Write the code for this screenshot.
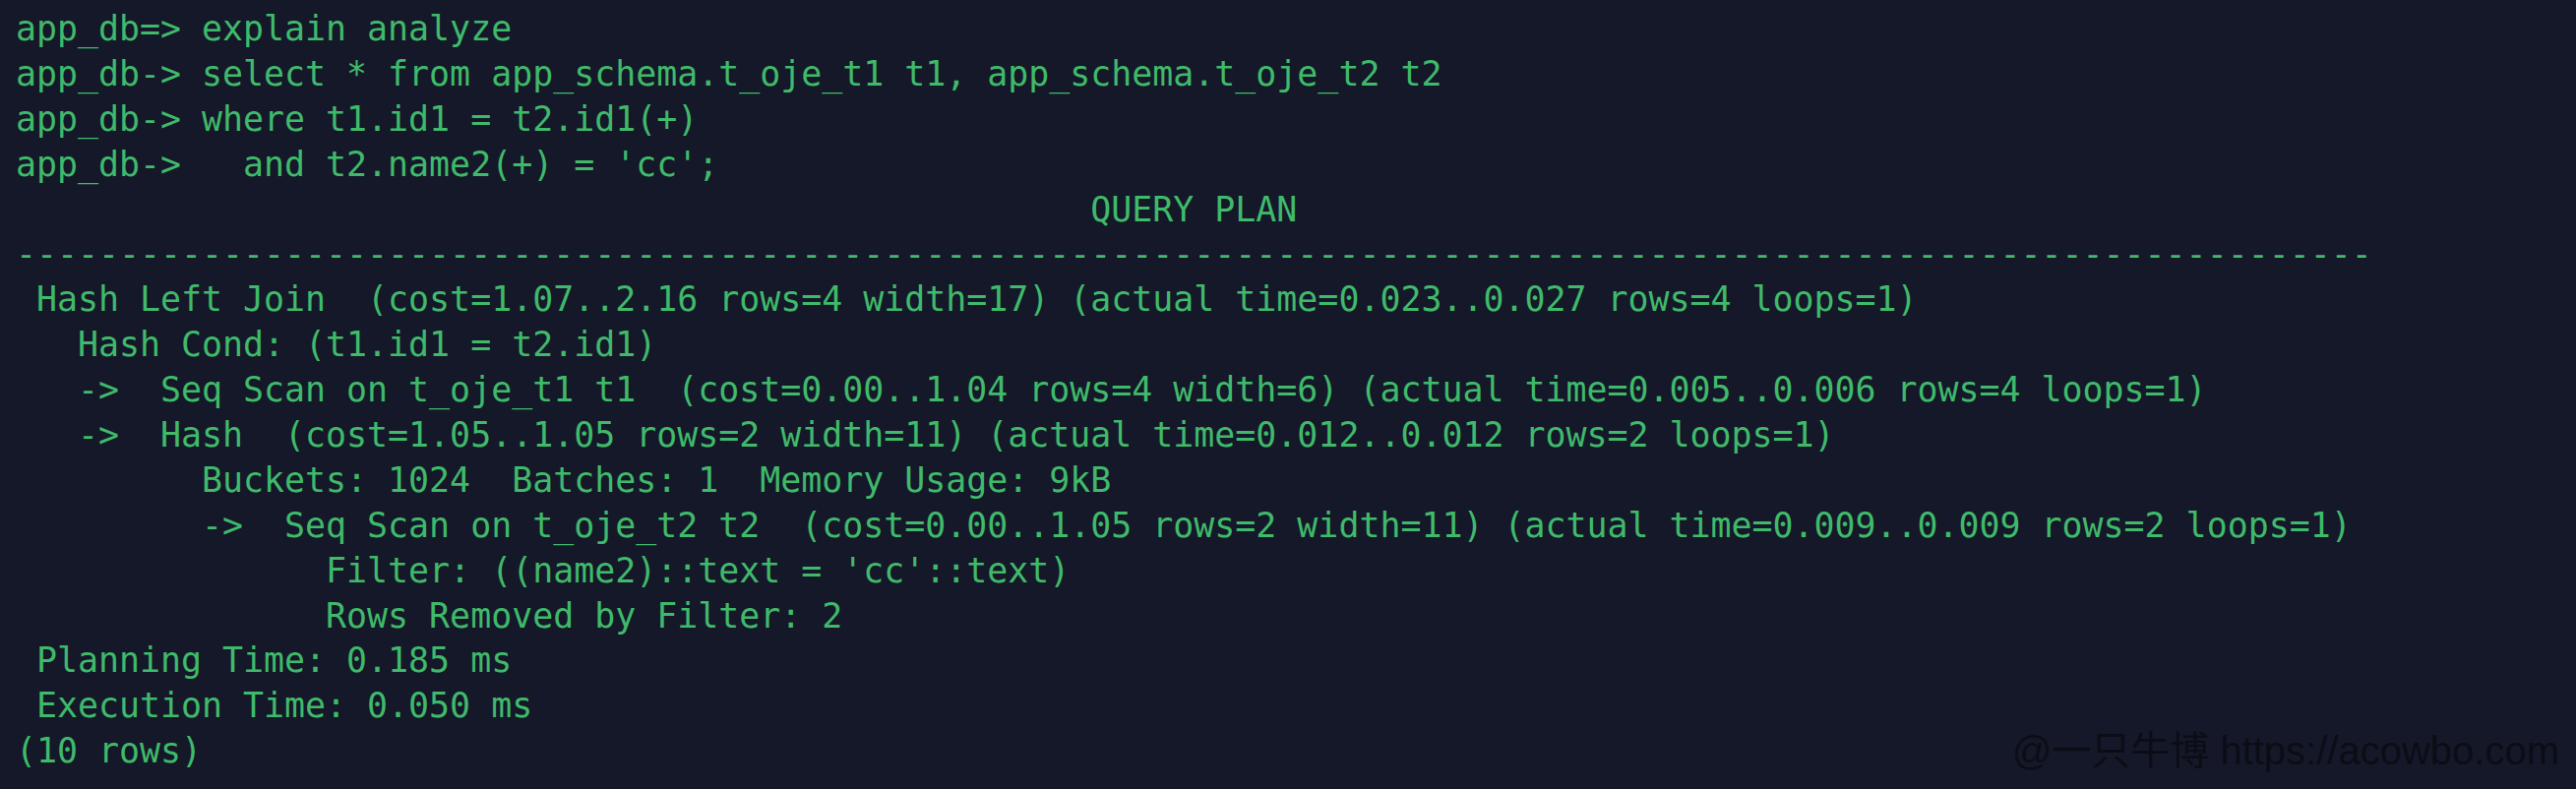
import React from "react";

const lines: string[] = [
  "app_db=> explain analyze",
  "app_db-> select * from app_schema.t_oje_t1 t1, app_schema.t_oje_t2 t2",
  "app_db-> where t1.id1 = t2.id1(+)",
  "app_db->   and t2.name2(+) = 'cc';",
  " ".repeat(52) + "QUERY PLAN",
  "-".repeat(114),
  " Hash Left Join  (cost=1.07..2.16 rows=4 width=17) (actual time=0.023..0.027 rows=4 loops=1)",
  "   Hash Cond: (t1.id1 = t2.id1)",
  "   ->  Seq Scan on t_oje_t1 t1  (cost=0.00..1.04 rows=4 width=6) (actual time=0.005..0.006 rows=4 loops=1)",
  "   ->  Hash  (cost=1.05..1.05 rows=2 width=11) (actual time=0.012..0.012 rows=2 loops=1)",
  "         Buckets: 1024  Batches: 1  Memory Usage: 9kB",
  "         ->  Seq Scan on t_oje_t2 t2  (cost=0.00..1.05 rows=2 width=11) (actual time=0.009..0.009 rows=2 loops=1)",
  "               Filter: ((name2)::text = 'cc'::text)",
  "               Rows Removed by Filter: 2",
  " Planning Time: 0.185 ms",
  " Execution Time: 0.050 ms",
  "(10 rows)",
];

export default function App() {
  return (
    <div className="relative w-full h-[802px] bg-[#151828] overflow-hidden">
      <div className="pl-[16px] pt-[7px] font-['DejaVu_Sans_Mono',monospace] text-[34.9px] leading-[45.9px] text-[#3fba6b]">
        {lines.map((l, i) => (
          <div key={i} className="whitespace-pre h-[45.9px]">
            {l}
          </div>
        ))}
      </div>
      <div className="absolute right-[17px] bottom-[15px] whitespace-pre font-['Liberation_Sans','Noto_Sans_CJK_SC',sans-serif] text-[40px] leading-[48px] text-[#0b0d16]">
        @一只牛博 https://acowbo.com
      </div>
    </div>
  );
}
